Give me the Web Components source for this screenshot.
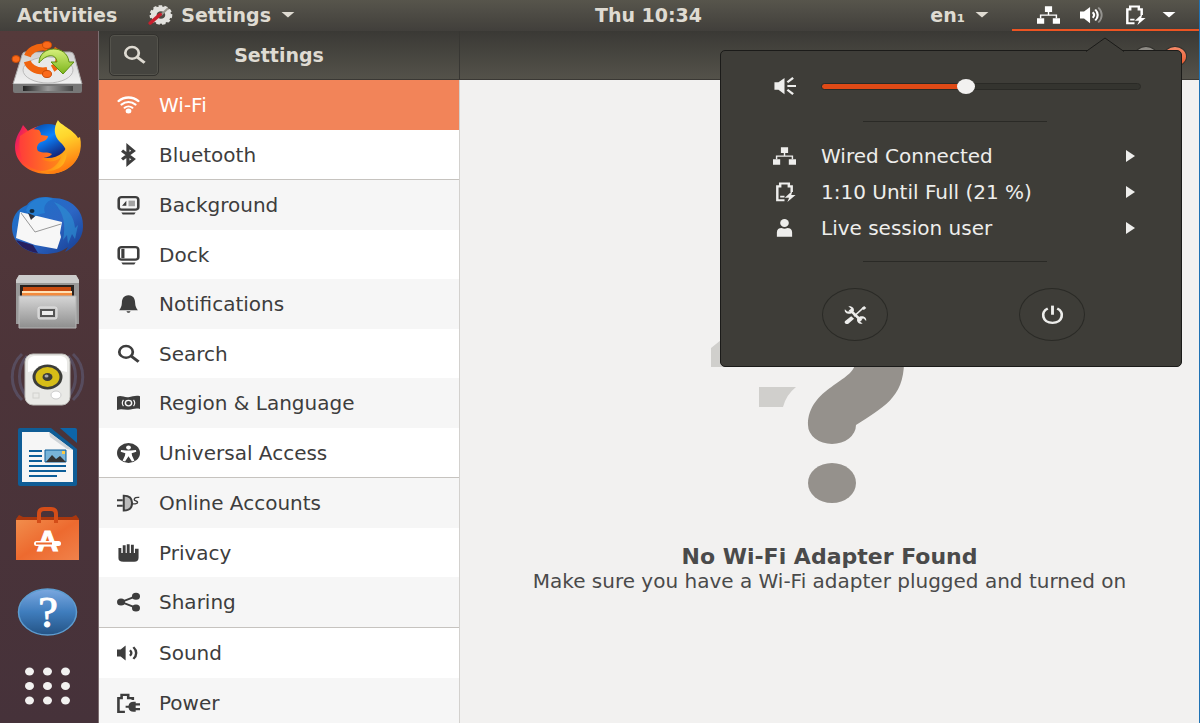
<!DOCTYPE html>
<html lang="en">
<head>
<meta charset="utf-8">
<title>Settings</title>
<style>
html {
    height: 100%;
}

body {
    box-sizing: border-box;
    height: 100%;
    margin: 0;
    display: flex;
    flex-direction: column;
    overflow: hidden;
    border-right: 1px solid #1f72b4;
    background: #4b353b;
    color: #3d3d3d;
    font-family: "DejaVu Sans", sans-serif;
    font-size: 20px;
    line-height: 24px;
}

.desktop {
    flex: 1;
    min-height: 0;
    display: flex;
}
</style>
</head>
<body>
<top-bar></top-bar>
<div class="desktop">
    <launcher-dock>
        <dock-item name="install" label="Install Ubuntu"></dock-item>
        <dock-item name="firefox" label="Firefox"></dock-item>
        <dock-item name="thunderbird" label="Thunderbird"></dock-item>
        <dock-item name="files" label="Files"></dock-item>
        <dock-item name="music" label="Rhythmbox"></dock-item>
        <dock-item name="writer" label="Writer"></dock-item>
        <dock-item name="software" label="Software"></dock-item>
        <dock-item name="help" label="Help"></dock-item>
        <dock-item name="apps" label="Show Applications" small></dock-item>
    </launcher-dock>
    <settings-window>
        <panel-group slot="list">
            <panel-row icon="wifi" selected>Wi-Fi</panel-row>
            <panel-row icon="bluetooth">Bluetooth</panel-row>
        </panel-group>
        <panel-group slot="list">
            <panel-row icon="background" shade>Background</panel-row>
            <panel-row icon="dock">Dock</panel-row>
            <panel-row icon="bell" shade>Notifications</panel-row>
            <panel-row icon="search">Search</panel-row>
            <panel-row icon="region" shade>Region &amp; Language</panel-row>
            <panel-row icon="access">Universal Access</panel-row>
        </panel-group>
        <panel-group slot="list">
            <panel-row icon="accounts" shade>Online Accounts</panel-row>
            <panel-row icon="privacy">Privacy</panel-row>
            <panel-row icon="share" shade>Sharing</panel-row>
        </panel-group>
        <panel-group slot="list">
            <panel-row icon="sound">Sound</panel-row>
            <panel-row icon="power" shade>Power</panel-row>
        </panel-group>
        <empty-state>
            <span slot="title">No Wi-Fi Adapter Found</span>
            Make sure you have a Wi-Fi adapter plugged and turned on
        </empty-state>
    </settings-window>
</div>
<system-menu>
    <menu-row icon="network">Wired Connected</menu-row>
    <menu-row icon="battery">1:10 Until Full (21 %)</menu-row>
    <menu-row icon="user">Live session user</menu-row>
</system-menu>

<script>
// small one-colour icons, all on a 16 x 16 grid
const ICONS = {
    wifi: `<g fill="none" stroke="currentColor" stroke-linecap="round"><path d="M1.200 4.800C5 1 11 1 14.800 4.800" stroke-width="1.900"/><path d="M3.200 7.600c2.800-2.700 6.800-2.700 9.600 0" stroke-width="1.700"/><path d="M5.300 10.200c1.600-1.500 3.800-1.500 5.400 0" stroke-width="1.500"/></g><circle cx="8" cy="12.800" r="2"/>`,
    bluetooth: `<path d="M3.500 4.500l8 6.800L7.600 15V1l3.900 3.700-8 6.800" fill="none" stroke="currentColor" stroke-width="2.200"/>`,
    background: `<rect x="1.200" y="1.700" width="13.600" height="10" rx="2" fill="none" stroke="currentColor" stroke-width="1.800"/><path d="M3.500 8.500l3-4v4zM3 14h10l-1 1.500H4z"/><path d="M8 4.500h4.500v4.500H8z" opacity=".45"/>`,
    dock: `<rect x="1.200" y="1.700" width="13.600" height="10" rx="2" fill="none" stroke="currentColor" stroke-width="1.800"/><path d="M3 3h2.200v7.500H3zM3 14h10l-1 1.500H4z"/>`,
    bell: `<path d="M8 1C4.500 1 3.500 4 3.400 7c-.1 2.800-.8 4.500-1.900 6h13c-1.100-1.500-1.800-3.200-1.900-6C12.500 4 11.500 1 8 1zM6.600 13.800h2.800c-.3.800-.8 1.200-1.400 1.200s-1.100-.4-1.400-1.200z"/>`,
    search: `<circle cx="6.300" cy="6.300" r="4.700" fill="none" stroke="currentColor" stroke-width="1.900"/><path d="M10 9.800l5 4.400" stroke="currentColor" stroke-width="2.200"/>`,
    region: `<path d="M0 3c3-1.500 5 .8 8 .3S13 1.500 16 2.500v10.200c-3-1-5 .3-8 .6s-5-1-8 .3z"/><g fill="none" stroke="#f6f6f6"><circle cx="8" cy="8" r="2.200"/><path d="M4.500 5.500c-1 1.500-1 3.500 0 5M11.500 5.500c1 1.500 1 3.500 0 5" stroke-width=".8"/></g>`,
    access: `<circle cx="8" cy="8" r="8"/><g fill="#fff"><circle cx="8" cy="3.600" r="1.700"/><path d="M2.800 5.500l3.700.5h3l3.700-.5.200 1.400-3.200 1.200.3 2 1.600 4-1.700.6L8 10.600l-2.400 4.100-1.700-.6 1.600-4 .3-2-3.200-1.200z"/></g>`,
    accounts: `<path d="M0 5h4v1.600H0zM0 9.400h4V11H0z"/><path d="M4.700 2c4 0 5.800 2.500 5.800 6s-1.800 6-5.800 6z" fill="#bbb" stroke="currentColor" stroke-width="1.400"/><path d="M10.500 8.500c2 .5 4 0 3.800-1.200S12 6.500 12 5.200s1.500-2 3.500-1.700" fill="none" stroke="currentColor"/>`,
    privacy: `<path d="M1 4h2v4h1V1.700h2v6.300h.8V1h2v7h.9V1.300h2V8h.8V4.500H15v7.300c0 2-1 3.200-3 3.200H4.500C2 15 1 14 1 12z"/>`,
    share: `<path d="M13 3.500L3 8l10 4.500" fill="none" stroke="currentColor" stroke-width="1.500"/><circle cx="2.800" cy="8" r="2.800"/><circle cx="13.200" cy="3.300" r="2.800"/><circle cx="13.200" cy="12.700" r="2.800"/>`,
    sound: `<path d="M0 5.200h2.500L6 2v12l-3.500-3.200H0z"/><path d="M9 5.800c1.300 1.300 1.300 3.100 0 4.400M11.400 3.300c2.600 2.700 2.600 6.700 0 9.400" fill="none" stroke="currentColor" stroke-width="1.700"/>`,
    power: `<path d="M5.500 15H1V4h2.200V1.400h4.600V4H11v1.500" fill="none" stroke="currentColor" stroke-width="1.800"/><path d="M6 10.200h2C8.300 8 9.500 7 11.500 7H13v1.200h3V10h-3v2h3v1.800h-3V15h-1.500c-2 0-3.200-1-3.500-3.200H6z"/>`,
    network: `<path d="M5.500 1h5v4.500h-5zM0 10.500h5V15H0zM11 10.500h5V15h-5zM7.500 5h1v3h-1z"/><path d="M2.500 10.500V8h11v2.500" fill="none" stroke="currentColor"/>`,
    volume: `<path d="M0 5.200h2.800L7 1.500v13l-4.200-3.700H0z"/><path d="M8.800 5.800c1.200 1.300 1.200 3.100 0 4.400M10.600 3.600c2.300 2.600 2.300 6.200 0 8.800" fill="none" stroke="currentColor" stroke-width="1.500"/><path d="M12.700 2c3.200 3.500 3.200 8.500 0 12" fill="none" stroke="currentColor" stroke-width="1.300" opacity=".4"/>`,
    speaker: `<path d="M1 5h2.800L8 1.500v13L3.800 11H1z"/><path d="M10 5l4-3.500M10 8h6M10 11l4 3.500" stroke="currentColor" stroke-width="1.600"/>`,
    battery: `<path d="M8 14.600H3V3.500h2V1.200h6v2.300h2V8" fill="none" stroke="currentColor" stroke-width="1.700"/><path d="M5 11h3v1.300H5zM13.500 7l-5.300 5.500h3L10 16l5.700-5.700h-3z"/>`,
    user: `<ellipse cx="8" cy="4" rx="3" ry="3.200"/><path d="M2.700 15v-3.500c0-2.400 1.300-3.500 3.300-3.500 1.300.8 2.700.8 4 0 2 0 3.300 1.100 3.300 3.500V15z"/>`,
    tools: `<path d="M4 3.800l8 8.700" stroke="currentColor" stroke-width="2"/><path d="M.6 3.300C0 6 2.600 7.700 5 6.800L6.800 5C7.500 2.600 5.600.4 3 1l2 2-.7 1.900-2 .3zM15.400 12.700c.6-2.700-2-4.400-4.400-3.500L9.200 11c-.7 2.400 1.200 4.600 3.800 4l-2-2 .7-1.900 2-.3z"/><path d="M13.500 2.200L7 9" stroke="currentColor" stroke-width="1.200"/><path d="M12.200 2.500l1.800-1.700 1.500 1.500-1.700 1.700zM5 9l2 2-4 4c-1.500 1-3.300-.8-2.200-2.200z"/>`,
    shutdown: `<path d="M4.700 2.800C-.7 5.700 1 14.300 8 14.300s8.700-8.600 3.300-11.500" fill="none" stroke="currentColor" stroke-width="1.900"/><path d="M7 .5h2v7.300H7z"/>`,
    gear: `<circle cx="9" cy="8" r="5" fill="none" stroke="#e3e2de" stroke-width="4"/><circle cx="9" cy="8" r="7" fill="none" stroke="#e3e2de" stroke-width="1.800" stroke-dasharray="2.400 1.500"/><path d="M9 8l5-5.500" stroke="#99958c" stroke-width="1.500"/><path d="M1.500 14.500L8.500 7.500" stroke="#c81f2d" stroke-width="2.600" stroke-linecap="round"/>`
};

// full-colour launcher pictures, 70 x 54
const PICTURES = {
    install: `
<defs><linearGradient id="a" x2="0" y2="1"><stop stop-color="#cfcfcf"/><stop offset="1" stop-color="#f2f2f2"/></linearGradient>
<linearGradient id="b"><stop stop-color="#222"/><stop offset=".5" stop-color="#999"/><stop offset="1" stop-color="#444"/></linearGradient>
<linearGradient id="c" x2="0" y2="1"><stop stop-color="#d7f07c"/><stop offset="1" stop-color="#7cb51c"/></linearGradient></defs>
<path d="M13 12h45q3 0 4 3l8 29H1l9-29q1-3 3-3z" fill="url(#a)" stroke="#a8a8a8"/>
<ellipse cx="36" cy="30" rx="25" ry="13" fill="#e8e8e8" stroke="#bbb"/>
<path d="M1 44h69v7q0 2-2 2H3q-2 0-2-2z" fill="#777"/><path d="M11 46h50v5H11z" fill="url(#b)"/>
<ellipse cx="31" cy="19" rx="16" ry="12" fill="none" stroke="#f0640f" stroke-width="7" stroke-dasharray="24 5.500" stroke-dashoffset="12"/>
<g fill="#fb6a1b" stroke="#c94c08"><ellipse cx="4" cy="19" rx="4" ry="3.500"/><ellipse cx="35" cy="5" rx="4.500" ry="3.500"/><ellipse cx="35" cy="34" rx="4.500" ry="3.500"/></g>
<path d="M27 23C27 5 55 4 57 22h5L51 34 39 22h6C44 13 34 14 27 23z" fill="url(#c)" stroke="#5d8f12"/>`,
    firefox: `
<defs><linearGradient id="a" x2="1" y2=".3"><stop stop-color="#c8107c"/><stop offset=".2" stop-color="#ff2f45"/><stop offset=".6" stop-color="#ff7a12"/><stop offset="1" stop-color="#ffc21e"/></linearGradient>
<linearGradient id="b" x2=".3" y2="1"><stop stop-color="#fff44f"/><stop offset=".45" stop-color="#ffd52c"/><stop offset="1" stop-color="#ff7c10"/></linearGradient>
<linearGradient id="c" x2=".6" y2="1"><stop stop-color="#0a3d92"/><stop offset=".5" stop-color="#0a84ff"/><stop offset="1" stop-color="#14267c"/></linearGradient>
<linearGradient id="d" x2="1"><stop stop-color="#ff3d3a"/><stop offset="1" stop-color="#ff8a16"/></linearGradient></defs>
<path d="M11 7l5 6c4-3 9-5 14-5h18l20 18c1 18-14 30-32 30S3 45 3 29c0-7 3-13 5-16z" fill="url(#a)"/>
<ellipse cx="36" cy="23" rx="20" ry="17" fill="url(#c)"/>
<path d="M46 2c1 4 16 10 20 18l2-1c3 13-2 24-10 30-9 7-22 9-30 4 10 1 20-1 24-8 5-9 2-16-4-21-6-6-7-14-2-22z" fill="url(#b)"/>
<path d="M8 18l8-5c3-2 7-2 11-1 1 1 2 3 2 5l7 1c0 3-3 5-7 6-4 2-5 6-3 9 5 3 9 0 14 3-3 4-8 3-11 5 7 4 15 3 20-2-5 14-20 17-31 10C9 44 6 31 8 18z" fill="url(#d)"/>`,
    thunderbird: `
<defs><linearGradient id="a" x2="1" y2="1"><stop stop-color="#1a73c9"/><stop offset=".55" stop-color="#2c66c4"/><stop offset="1" stop-color="#153a8e"/></linearGradient></defs>
<path d="M15 9C19 3 30-1 41 2c18 0 31 12 30 29 0 11-8 20-18 25l3-5c-7 5-14 7-24 7C12 57 0 46 0 31 0 21 5 13 15 9z" fill="url(#a)"/>
<path d="M4 44l17 5 5 8C16 56 8 51 4 44z" fill="#261f5f"/>
<path d="M8 16l13 3 29 7-2 11 1 4-4 12-22-4-19-7z" fill="#f7f7f7"/><path d="M9 17l14 19 26-8" fill="none" stroke="#999"/>
<path d="M14 14C18 3 31-1 41 3c-8 3-10 8-8 14-5 1-9 2-12 5-2-3-5-4-7-8z" fill="#267ed2"/>
<path d="M16 17l7 3-4 4z" fill="#303038"/><ellipse cx="20" cy="15" rx="2.500" ry="2" fill="#102a40"/>
<path d="M42 6c13 5 20 14 21 26l3-3-3 14-3-5-4 10-1-9-4 5c3-15 1-27-9-38z" fill="#2d8fd2" opacity=".65"/>`,
    files: `
<defs><linearGradient id="a" x2="0" y2="1"><stop stop-color="#d6d6d6"/><stop offset="1" stop-color="#8e8e8e"/></linearGradient></defs>
<path d="M7 1h57l3 5v44H4V6z" fill="#999"/><path d="M7 1h57l3 5v3H4V6z" fill="#ccc"/>
<path d="M8 11h54v12H8z" fill="#29221f"/><path d="M11 13h48v10H11z" fill="#c84b10"/><path d="M10 17h50v6H10z" fill="#f38a3c"/><path d="M10 17h50v2H10z" fill="#ffe0b5"/>
<path d="M7 22h57v32H7z" fill="url(#a)" stroke="#b5b5b5"/>
<rect x="26" y="33" width="19" height="12" rx="2" fill="#ccc" stroke="#e2e2e2"/><rect x="29" y="36" width="13" height="6" fill="#eee" stroke="#555" stroke-width="2"/>`,
    music: `
<g fill="none" stroke="#6f85b5" stroke-width="3" opacity=".3"><path d="M10 2C-3 14-3 36 10 48M15 4C5 15 5 34 15 45M61 2c13 12 13 34 0 46M56 4c10 11 10 30 0 41"/></g>
<rect x="13" y="2" width="45" height="51" rx="8" fill="#e9e9e6" stroke="#bcbcb8"/>
<path d="M16 10q0-5 6-6h27q6 1 6 6v10q-20-6-39 0z" fill="#fff"/>
<ellipse cx="35.500" cy="25" rx="15" ry="12.500" fill="#3b3c38"/><ellipse cx="35.500" cy="25" rx="12" ry="10" fill="#d6bd17"/><ellipse cx="35.500" cy="25" rx="5" ry="4" fill="#3b3c38"/><ellipse cx="34.500" cy="24" rx="2" ry="1.500" fill="#aaa"/>
<ellipse cx="44" cy="43" rx="5" ry="4" fill="#fff" stroke="#ccc"/><rect x="21" y="41" width="6" height="5" fill="none" stroke="#d2d2ce"/>`,
    writer: `
<path d="M8-2h31l26 21v35q0 2-2 2H8q-2 0-2-2V0q0-2 2-2z" fill="#0f5d96"/><path d="M48-2h15q2 0 2 2v13z" fill="#0d65a8"/>
<path d="M10 2h27l24 18v32H10z" fill="#f6f6f6"/><path d="M37 2l24 18-6-1-17-12z" fill="#cfd4d8"/>
<g fill="#0c5e99"><path d="M17 20h13v2H17zM17 25h13v2H17zM17 30h13v2H17zM17 35h37v2H17zM17 40h37v2H17zM17 45h28v2H17z"/></g>
<path d="M33 20h21v12H33z" fill="#78b4d8" stroke="#0c5e99"/><path d="M34 32l6-7 4 4 4-3 6 6z" fill="#333"/><path d="M50 21h3v3h-3z" fill="#fc4"/>`,
    software: `
<defs><linearGradient id="a" x2="1" y2="1"><stop stop-color="#f18d4c"/><stop offset=".5" stop-color="#ed6a2f"/><stop offset="1" stop-color="#f0824b"/></linearGradient></defs>
<path d="M4 11l3-4 4 2h49l4-2 3 4v5H4z" fill="#a9370e"/><path d="M4 12h63v40H4z" fill="url(#a)"/>
<path d="M27 15V6q0-5 5-5h7q5 0 5 5v9" fill="none" stroke="#d44d18" stroke-width="4"/>
<text x="35.500" y="43" text-anchor="middle" font-size="30" font-weight="bold" fill="#fff" stroke="#fff">A</text>
<rect x="22" y="33" width="27" height="5" rx="2.500" fill="#fff"/><path d="M24 35.500h16" stroke="#ed6a2f" stroke-width="2"/>`,
    help: `
<defs><linearGradient id="a" x2="0" y2="1"><stop stop-color="#7ba8e0"/><stop offset=".5" stop-color="#3f7dbd"/><stop offset="1" stop-color="#245385"/></linearGradient></defs>
<ellipse cx="35.500" cy="26" rx="29" ry="23" fill="url(#a)" stroke="#5d9cd0" stroke-width="1.500"/>
<text x="36" y="41" text-anchor="middle" font-size="44" font-family="Liberation Serif, serif" fill="#fff" stroke="#fff">?</text>`,
    apps: [17.5, 35.5, 53.5].map(x => [12.5, 27, 41.5].map(y => `<ellipse cx="${x}" cy="${y}" rx="4.500" ry="4" fill="#f2f1f0"/>`).join("")).join("")
};

class SymIcon extends HTMLElement {
    constructor() {
        super();
        this.attachShadow({mode: "open"});
    }

    connectedCallback() {
        this.shadowRoot.innerHTML = `
<style>
:host { display: block; flex: none; width: 23px; height: 20px; }
svg { display: block; width: 100%; height: 100%; overflow: visible; }
</style>
<svg viewBox="0 0 16 16" preserveAspectRatio="none" fill="currentColor" aria-hidden="true">${ICONS[this.getAttribute("name")]}</svg>`;
    }
}
customElements.define("sym-icon", SymIcon);

class TopBar extends HTMLElement {
    constructor() {
        super();
        this.attachShadow({mode: "open"});
        this.shadowRoot.innerHTML = `
<style>
:host {
    flex: none;
    display: grid;
    grid-template-columns: minmax(0, 1fr) auto minmax(0, 1fr);
    height: 31px;
    background: linear-gradient(#57554c, #413f3b);
    color: #dfdbd2;
    font-size: 19px;
    font-weight: bold;
}
.group { display: flex; }
.end { justify-content: flex-end; }
button {
    display: flex;
    align-items: center;
    gap: 10px;
    padding: 0 8px 2px;
    border: 0;
    background: none;
    color: inherit;
    font: inherit;
    white-space: nowrap;
}
.first { padding-left: 17px; padding-right: 23px; }
.clock { padding-left: 98px; padding-right: 0; }
/* triangle that marks a menu */
.caret {
    width: 14px;
    height: 6px;
    background: currentColor;
    clip-path: polygon(0 0, 100% 0, 50% 100%);
}
.status {
    gap: 20px;
    padding: 0 23px 0 25px;
    margin-left: 15px;
    border-bottom: 2px solid #ed5422;
    color: #fff;
}
.status .caret { margin-left: -4px; }
</style>
<div class="group">
    <button class="first">Activities</button>
    <button><sym-icon name="gear"></sym-icon>Settings<span class="caret"></span></button>
</div>
<button class="clock">Thu 10:34</button>
<div class="group end">
    <button>en₁<span class="caret"></span></button>
    <button class="status" aria-label="System menu">
        <sym-icon name="network"></sym-icon>
        <sym-icon name="volume"></sym-icon>
        <sym-icon name="battery"></sym-icon>
        <span class="caret"></span>
    </button>
</div>`;
    }
}
customElements.define("top-bar", TopBar);

class LauncherDock extends HTMLElement {
    constructor() {
        super();
        this.attachShadow({mode: "open"});
        this.shadowRoot.innerHTML = `
<style>
:host {
    flex: none;
    box-sizing: border-box;
    width: 99px;
    border-right: 1px solid #7c6d70;
    background: linear-gradient(#553a3b, #4c3439 50%, #46323a);
}
nav {
    display: flex;
    flex-direction: column;
    align-items: center;
    gap: 24px;
    padding: 9px 4px 0 0;
}
</style>
<nav aria-label="Launcher"><slot></slot></nav>`;
    }
}
customElements.define("launcher-dock", LauncherDock);

class DockItem extends HTMLElement {
    constructor() {
        super();
        this.attachShadow({mode: "open"});
    }

    connectedCallback() {
        this.shadowRoot.innerHTML = `
<style>
:host { display: block; width: 70px; height: 54px; }
:host([small]) { height: 44px; }
button { display: block; width: 100%; height: 100%; padding: 0; border: 0; background: none; }
svg { display: block; width: 100%; height: 100%; overflow: visible; }
</style>
<button aria-label="${this.getAttribute("label")}">
    <svg viewBox="0 0 70 54" preserveAspectRatio="xMidYMid slice" aria-hidden="true">${PICTURES[this.getAttribute("name")]}</svg>
</button>`;
    }
}
customElements.define("dock-item", DockItem);

class SettingsWindow extends HTMLElement {
    constructor() {
        super();
        this.attachShadow({mode: "open"});
        this.shadowRoot.innerHTML = `
<style>
:host {
    flex: 1;
    min-width: 0;
    display: grid;
    grid-template-columns: 361px minmax(0, 1fr);
    grid-template-rows: 49px minmax(0, 1fr);
    background: #f2f1f0;
}
header {
    grid-column: 1 / -1;
    display: grid;
    grid-template-columns: subgrid;
    box-sizing: border-box;
    border-bottom: 1px solid #3a3834;
    background: linear-gradient(#3a3935, #54524a);
    color: #dfdbd2;
}
.left {
    display: grid;
    grid-template-columns: 1fr auto 1fr;
    align-items: center;
    padding: 0 10px;
    border-right: 1px solid #383733;
}
h1 { margin: 0; font-size: 19px; }
.find {
    display: grid;
    place-items: center;
    box-sizing: border-box;
    width: 50px;
    height: 42px;
    padding: 0;
    border: 1px solid #33322e;
    border-radius: 5px;
    background: #45443f;
    color: inherit;
    box-shadow: inset 0 0 0 1px #54534c;
}
.right {
    display: flex;
    justify-content: flex-end;
    align-items: center;
    gap: 5px;
    padding: 3px 12px 0 0;
}
.right button {
    width: 24px;
    height: 21px;
    padding: 0;
    border: 1px solid #33322e;
    border-radius: 50%;
    background: #8d8a84;
}
/* this one stays under the open system menu */
.right .minimize { background: #4a4943; }
.right .close { background: linear-gradient(#f58a68, #e9572b); }
.list {
    min-height: 0;
    overflow: hidden;
    border-right: 1px solid #d3d1ce;
    background: #fff;
}
</style>
<header>
    <div class="left">
        <button class="find" aria-label="Search"><sym-icon name="search"></sym-icon></button>
        <h1>Settings</h1>
    </div>
    <div class="right">
        <button aria-label="Maximize"></button>
        <button class="close" aria-label="Close"></button>
    </div>
</header>
<nav class="list" aria-label="Panels"><slot name="list"></slot></nav>
<slot></slot>`;
    }
}
customElements.define("settings-window", SettingsWindow);

class PanelGroup extends HTMLElement {
    constructor() {
        super();
        this.attachShadow({mode: "open"});
        this.shadowRoot.innerHTML = `
<style>
:host { display: block; border-bottom: 1px solid #c6c3bf; }
::slotted(:nth-child(odd)) { height: 50px; }
::slotted(:nth-child(even)) { height: 49px; }
</style>
<slot></slot>`;
    }
}
customElements.define("panel-group", PanelGroup);

class PanelRow extends HTMLElement {
    constructor() {
        super();
        this.attachShadow({mode: "open"});
    }

    connectedCallback() {
        this.shadowRoot.innerHTML = `
<style>
:host { display: block; background: #fff; }
:host([shade]) { background: #f6f6f6; }
:host([selected]) { background: #f28459; color: #fff; }
button {
    display: flex;
    align-items: center;
    gap: 19px;
    width: 100%;
    height: 100%;
    padding: 0 18px;
    border: 0;
    background: none;
    color: inherit;
    font: inherit;
    white-space: nowrap;
}
</style>
<button><sym-icon name="${this.getAttribute("icon")}"></sym-icon><slot></slot></button>`;
    }
}
customElements.define("panel-row", PanelRow);

class EmptyState extends HTMLElement {
    constructor() {
        super();
        this.attachShadow({mode: "open"});
        this.shadowRoot.innerHTML = `
<style>
:host {
    display: flex;
    flex-direction: column;
    align-items: center;
    justify-content: center;
    min-width: 0;
    text-align: center;
    color: #4a4a4a;
    font-size: 20px;
    line-height: 22px;
}
svg { flex: none; width: 240px; height: 292px; margin-bottom: 40px; }
h2, p { margin: 0; }
h2 { font-size: 22px; line-height: 26px; }
</style>
<svg viewBox="0 0 240 292" aria-hidden="true">
    <path d="M1 136L16 124v31H1zM49 175h37q-10 8-13 20H49z" fill="#d0cfcc"/>
    <path d="M98 120a48 40 0 0 1 96 30c0 36-22 46-48 63a24 19 0 0 1-48 0c0-37 47-44 47-62 0-26-7-32-25-32z" fill="#95918c"/>
    <ellipse cx="122" cy="271" rx="24" ry="20" fill="#95918c"/>
</svg>
<h2><slot name="title"></slot></h2>
<p><slot></slot></p>`;
    }
}
customElements.define("empty-state", EmptyState);

class SystemMenu extends HTMLElement {
    constructor() {
        super();
        this.attachShadow({mode: "open"});
        this.shadowRoot.innerHTML = `
<style>
/* hangs over the window, under the status icons */
:host {
    position: absolute;
    top: 50px;
    right: 18px;
    box-sizing: border-box;
    width: 462px;
    padding-top: 15px;
    border: 1px solid #1b1b19;
    border-radius: 5px;
    background: #3e3d38;
    color: #eeeeec;
}
.tip {
    position: absolute;
    top: -14px;
    right: 57px;
    width: 38px;
    height: 15px;
}
.volume {
    display: flex;
    align-items: center;
    gap: 25px;
    height: 40px;
    padding: 0 40px 0 52px;
}
input {
    --fill: 45%;
    -webkit-appearance: none;
    appearance: none;
    flex: 1;
    min-width: 0;
    height: 16px;
    margin: 0;
    background: none;
}
input::-webkit-slider-runnable-track {
    box-sizing: border-box;
    height: 7px;
    border: 1px solid #2a2a26;
    border-radius: 4px;
    background: linear-gradient(90deg, #df4a16 var(--fill), #34342f var(--fill));
}
input::-webkit-slider-thumb {
    -webkit-appearance: none;
    width: 18px;
    height: 15px;
    margin-top: -5px;
    border-radius: 50%;
    background: #f2f1f0;
}
hr {
    width: 40%;
    height: 1px;
    margin: 15px 0 16px 142px;
    border: 0;
    background: #2a2a26;
}
.actions {
    display: flex;
    gap: 131px;
    padding: 10px 0 25px 101px;
}
.actions button {
    display: grid;
    place-items: center;
    box-sizing: border-box;
    width: 66px;
    height: 53px;
    padding: 0;
    border: 1px solid #2a2a26;
    border-radius: 50%;
    background: none;
    color: inherit;
}
</style>
<svg class="tip" viewBox="0 0 38 15" aria-hidden="true"><path d="M0 14.500L19 1l19 13.500" fill="#3e3d38" stroke="#1b1b19"/><path d="M2 14h34v1H2z" fill="#3e3d38"/></svg>
<div class="volume">
    <sym-icon name="speaker"></sym-icon>
    <input type="range" min="0" max="100" value="45" aria-label="Volume">
</div>
<hr>
<slot></slot>
<hr>
<div class="actions">
    <button aria-label="Settings"><sym-icon name="tools"></sym-icon></button>
    <button aria-label="Power Off"><sym-icon name="shutdown"></sym-icon></button>
</div>`;
        const volume = this.shadowRoot.querySelector("input");
        volume.oninput = () => volume.style.setProperty("--fill", volume.value + "%");
    }
}
customElements.define("system-menu", SystemMenu);

class MenuRow extends HTMLElement {
    constructor() {
        super();
        this.attachShadow({mode: "open"});
    }

    connectedCallback() {
        this.shadowRoot.innerHTML = `
<style>
:host { display: block; height: 36px; }
button {
    display: flex;
    align-items: center;
    gap: 25px;
    width: 100%;
    height: 100%;
    padding: 0 46px 0 52px;
    border: 0;
    background: none;
    color: inherit;
    font: inherit;
    white-space: nowrap;
}
.arrow {
    width: 9px;
    height: 12px;
    margin-left: auto;
    background: currentColor;
    clip-path: polygon(0 0, 100% 50%, 0 100%);
}
</style>
<button><sym-icon name="${this.getAttribute("icon")}"></sym-icon><slot></slot><span class="arrow"></span></button>`;
    }
}
customElements.define("menu-row", MenuRow);
</script>
</body>
</html>
